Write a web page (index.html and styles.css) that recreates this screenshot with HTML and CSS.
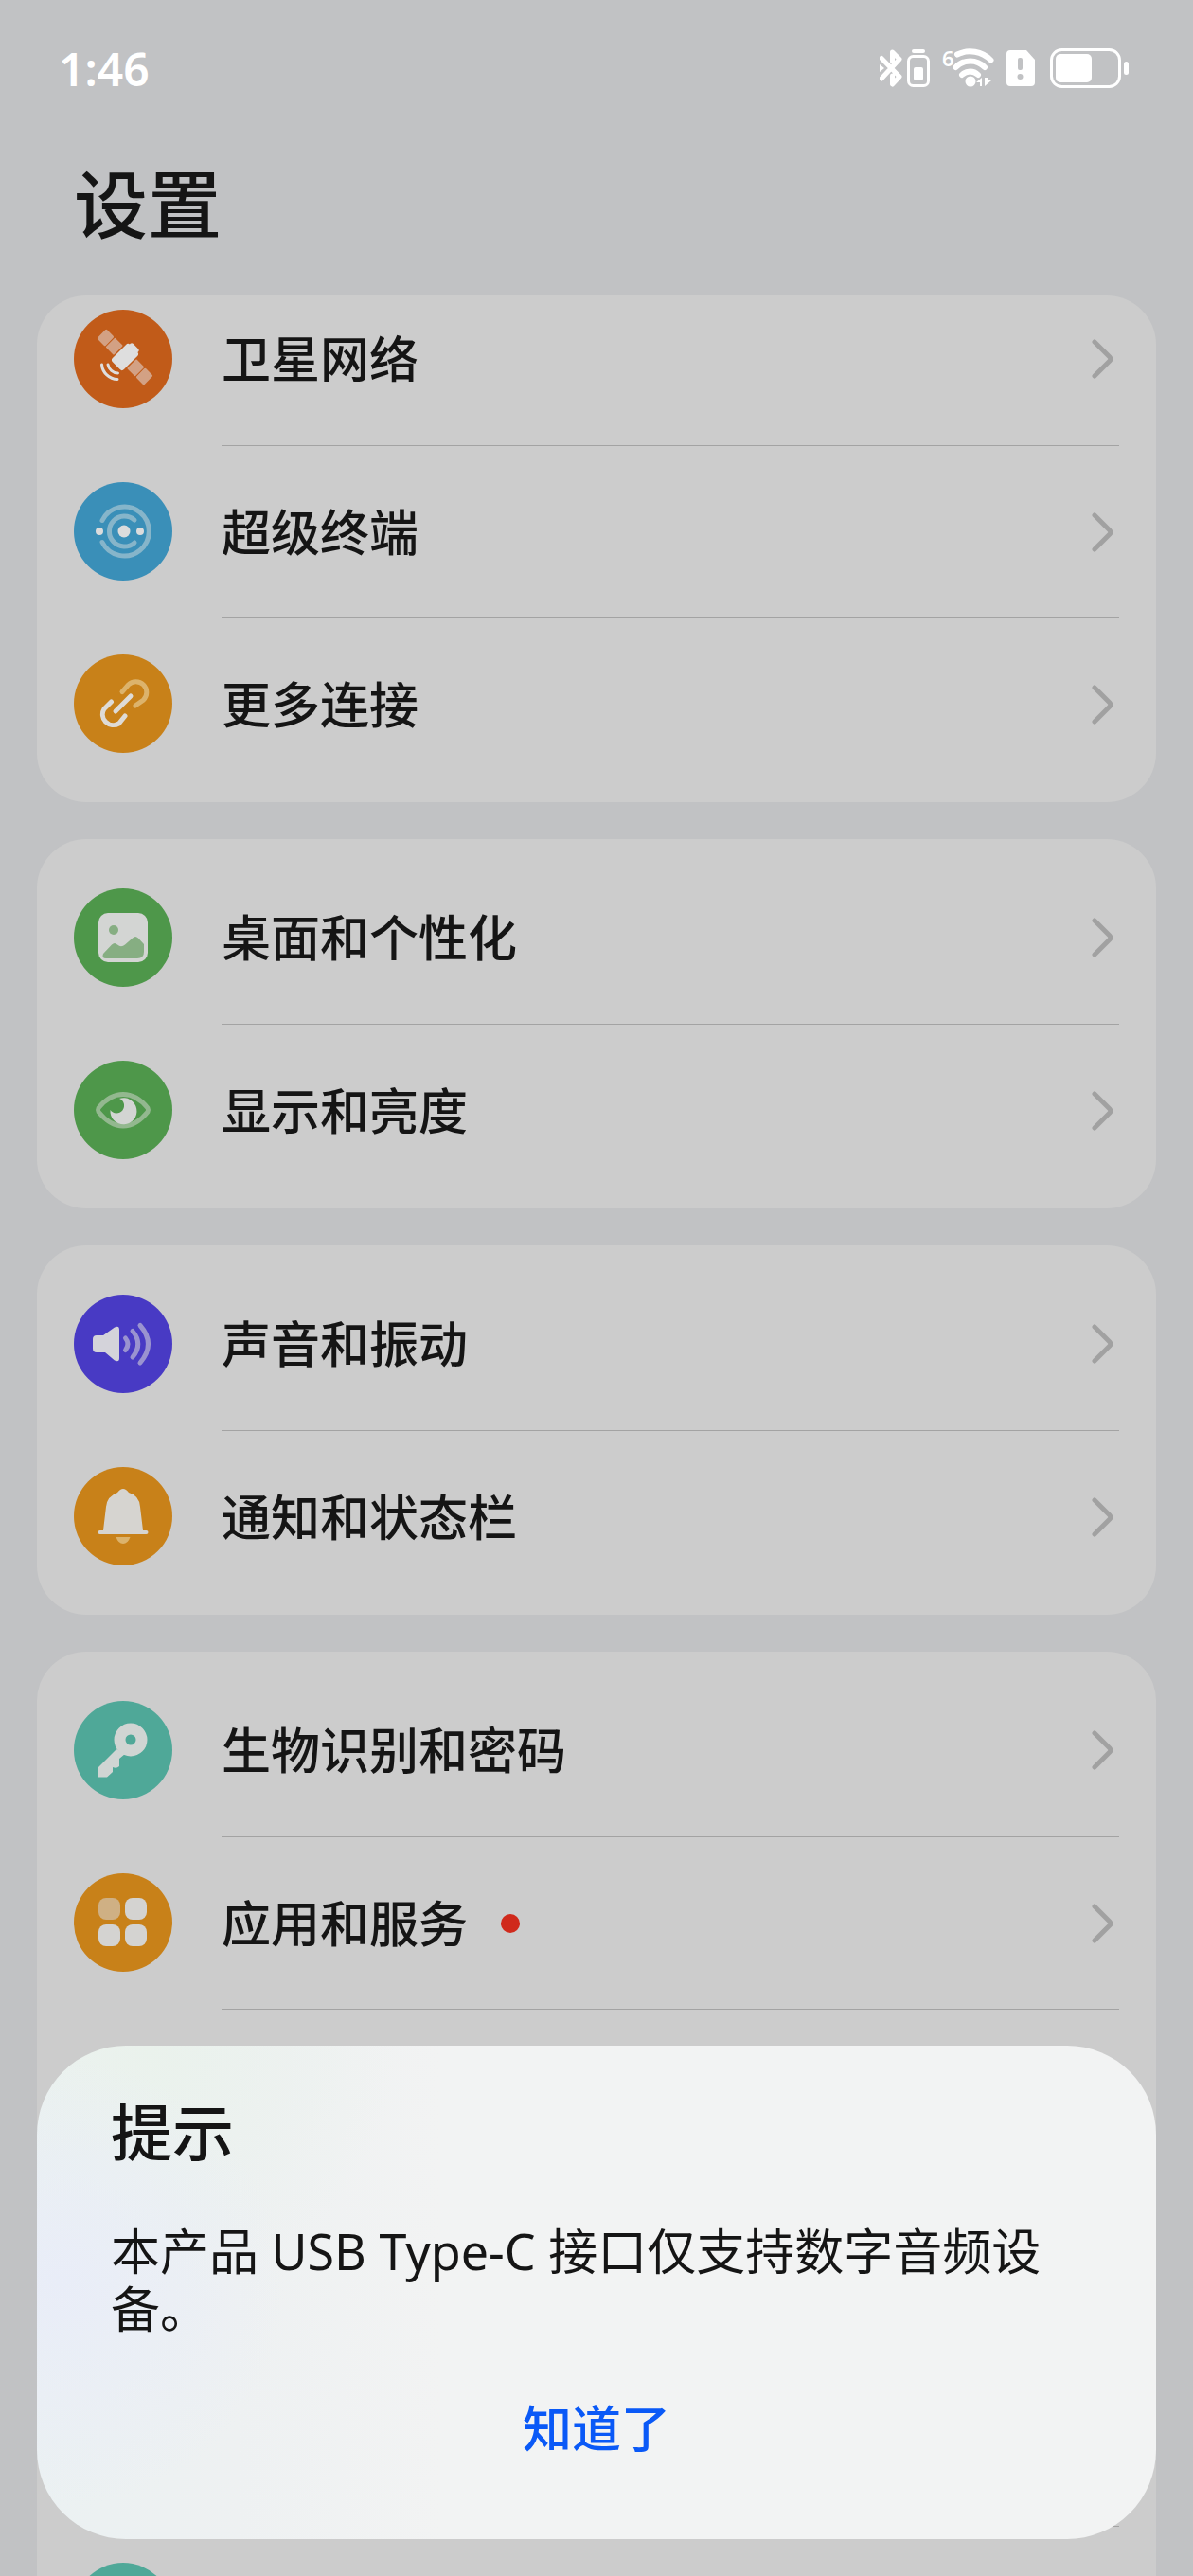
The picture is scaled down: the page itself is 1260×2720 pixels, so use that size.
FILE: index.html
```
<!DOCTYPE html>
<html lang="zh-CN">
<head>
    <meta charset="UTF-8">
    <meta name="viewport" content="width=device-width, initial-scale=1.0">
    <title>设置</title>
    <link rel="stylesheet" href="styles.css">
</head>
<body>
    <!-- Status bar -->
    <div class="status-bar">
        <span class="time">1:46</span>
        <div class="status-icons">
            <svg class="bluetooth" width="24" height="42" viewBox="0 0 24 42">
                <path d="M2 10.500L21 30L13.500 38V29M13.500 14V4L21 11.500L2 32" fill="none" stroke="#fff" stroke-width="5" stroke-linecap="round" stroke-linejoin="round"/>
                <path d="M0 17l5 4-5 4z" fill="#fff"/>
            </svg>
            <svg class="device-battery" width="24" height="42" viewBox="0 0 24 42">
                <rect x="5" y="1" width="14" height="4" rx="2" fill="#fff"/>
                <rect x="1.500" y="8.500" width="21" height="31" rx="5" fill="none" stroke="#fff" stroke-width="3"/>
                <rect x="7" y="20" width="10" height="14" rx="2" fill="#fff"/>
            </svg>
            <svg class="wifi" width="55" height="42" viewBox="0 0 55 42">
                <text x="0" y="19" class="wifi-gen">6</text>
                <g fill="none" stroke="#fff" stroke-width="6" stroke-linecap="round">
                    <path d="M16 6.500A31 31 0 0 1 51.500 12.500"/>
                    <path d="M14.500 20A21 21 0 0 1 45 20"/>
                    <path d="M21 28A12 12 0 0 1 38 28"/>
                </g>
                <circle cx="30" cy="35" r="5.500" fill="#fff"/>
                <path d="M42 31v9h-2v-4h-4zM45 31v9l7-6h-4v-3z" fill="#fff"/>
            </svg>
            <svg class="sim" width="30" height="42" viewBox="0 0 30 42">
                <path d="M4 2H21L30 12V36a4 4 0 0 1-4 4H4a4 4 0 0 1-4-4V6a4 4 0 0 1 4-4z" fill="#fff"/>
                <rect x="12" y="10" width="5" height="13" rx="2" fill="#c1c2c4"/>
                <circle cx="14.500" cy="30" r="3" fill="#c1c2c4"/>
            </svg>
            <svg class="battery" width="83" height="42" viewBox="0 0 83 42">
                <rect x="1.500" y="1.500" width="72" height="39" rx="11" fill="none" stroke="#fff" stroke-width="3"/>
                <rect x="6" y="6" width="38" height="30" rx="5" fill="#fff"/>
                <rect x="78" y="14" width="5" height="14" rx="2.500" fill="#fff"/>
            </svg>
        </div>
    </div>

    <h1 class="page-title">设置</h1>

    <!-- Shared chevron -->
    <svg class="symbols" width="0" height="0">
        <symbol id="chevron" viewBox="0 0 24 44">
            <path d="M4 4L20 20q2 2 0 4L4 40" fill="none" stroke="#a1a1a1" stroke-width="5" stroke-linecap="round" stroke-linejoin="round"/>
        </symbol>
    </svg>

    <main class="settings">
        <ul class="group scrolled">
            <li>
                <a class="row" href="#satellite">
                    <svg class="icon orange" viewBox="0 0 104 104">
                        <g transform="rotate(45 54 50)">
                            <g fill="#d3a184">
                                <rect x="19" y="43" width="12" height="14" rx="1.500"/>
                                <rect x="32" y="43" width="12" height="14" rx="1"/>
                                <rect x="64" y="43" width="12" height="14" rx="1"/>
                                <rect x="77" y="43" width="12" height="14" rx="1.500"/>
                            </g>
                            <rect x="45.500" y="37" width="17" height="26" rx="3" fill="#dedede"/>
                            <rect x="48" y="34" width="12" height="6" rx="2" fill="#dedede"/>
                        </g>
                        <g fill="none" stroke="#dedede" stroke-width="3" stroke-linecap="round">
                            <path d="M29.500 58A17 17 0 0 0 46 73.500"/>
                            <path d="M36 58A11 11 0 0 0 46.500 67"/>
                        </g>
                    </svg>
                    <span class="row-body">
                        <span class="label">卫星网络</span>
                        <svg class="chevron"><use href="#chevron"/></svg>
                    </span>
                </a>
            </li>
            <li>
                <a class="row" href="#super-device">
                    <svg class="icon blue" viewBox="0 0 104 104">
                        <g fill="none" stroke="#86b5ca" stroke-width="5" stroke-linecap="round">
                            <path d="M30 40.500A26 26 0 1 1 30 63.500"/>
                            <path d="M64 40A16 16 0 1 0 64 64"/>
                        </g>
                        <g fill="#dcdcdc">
                            <circle cx="53" cy="52" r="6.500"/>
                            <circle cx="27" cy="52" r="4"/>
                            <circle cx="70" cy="52" r="4"/>
                        </g>
                    </svg>
                    <span class="row-body">
                        <span class="label">超级终端</span>
                        <svg class="chevron"><use href="#chevron"/></svg>
                    </span>
                </a>
            </li>
            <li>
                <a class="row" href="#connections">
                    <svg class="icon amber" viewBox="0 0 104 104">
                        <g fill="none" stroke-width="5" stroke-linecap="round">
                            <path d="M51 39.500L57.500 32A11.300 11.300 0 0 1 73.500 48L65 54" stroke="#dcb36c"/>
                            <path d="M39.500 50L32 57.500A11.300 11.300 0 0 0 47.500 73L54 65" stroke="#dedbd6"/>
                            <path d="M60 44L44 60" stroke="#dedbd6"/>
                        </g>
                    </svg>
                    <span class="row-body">
                        <span class="label">更多连接</span>
                        <svg class="chevron"><use href="#chevron"/></svg>
                    </span>
                </a>
            </li>
        </ul>

        <ul class="group">
            <li>
                <a class="row" href="#desktop">
                    <svg class="icon green" viewBox="0 0 104 104">
                        <rect x="26" y="26" width="52" height="52" rx="10" fill="#d3d5d3"/>
                        <circle cx="42" cy="44" r="5" fill="#86ae82"/>
                        <path d="M31 69L40 59.500q3-3 6 0q4 3.500 8 0L62 52.500q3-3 6 0L74 59V67q0 7-7 7H34q-5 0-3-5z" fill="#86ae82"/>
                    </svg>
                    <span class="row-body">
                        <span class="label">桌面和个性化</span>
                        <svg class="chevron"><use href="#chevron"/></svg>
                    </span>
                </a>
            </li>
            <li>
                <a class="row" href="#display">
                    <svg class="icon green" viewBox="0 0 104 104">
                        <path d="M26 50C34 40 43 35.500 52 35.500S70 40 78 50Q79 52 78 54C70 64 61 69 52 69S34 64 26 54Q25 52 26 50z" fill="none" stroke="#93b88f" stroke-width="5"/>
                        <path d="M48 40A14 14 0 1 1 38.500 52A8 8 0 1 0 48 40z" fill="#d3d5d3"/>
                    </svg>
                    <span class="row-body">
                        <span class="label">显示和亮度</span>
                        <svg class="chevron"><use href="#chevron"/></svg>
                    </span>
                </a>
            </li>
        </ul>

        <ul class="group">
            <li>
                <a class="row" href="#sound">
                    <svg class="icon purple" viewBox="0 0 104 104">
                        <path d="M24 43H31L43 34.500Q48 32 48 37V67Q48 72 43 69.500L33 61H24Q20 61 20 57V47Q20 43 24 43z" fill="#d4d3da"/>
                        <g fill="none" stroke="#9a93d0" stroke-width="5" stroke-linecap="round">
                            <path d="M54.500 46Q59.500 52 54.500 58.500"/>
                            <path d="M62 38.500Q73.500 52 62 66"/>
                            <path d="M70 32.500Q87 52 70 72"/>
                        </g>
                    </svg>
                    <span class="row-body">
                        <span class="label">声音和振动</span>
                        <svg class="chevron"><use href="#chevron"/></svg>
                    </span>
                </a>
            </li>
            <li>
                <a class="row" href="#notifications">
                    <svg class="icon amber" viewBox="0 0 104 104">
                        <path d="M46 27Q52 19 58 27Q69 30 70 42L73 67H76.500a2 2 0 0 1 0 4H27.500a2 2 0 0 1 0-4H31L34 42Q35 31 46 27z" fill="#d6d4d0"/>
                        <path d="M44.500 74H59.500Q57 81 52 81T44.500 74z" fill="#dcb36c"/>
                    </svg>
                    <span class="row-body">
                        <span class="label">通知和状态栏</span>
                        <svg class="chevron"><use href="#chevron"/></svg>
                    </span>
                </a>
            </li>
        </ul>

        <ul class="group">
            <li>
                <a class="row" href="#biometrics">
                    <svg class="icon teal" viewBox="0 0 104 104">
                        <circle cx="60" cy="41" r="11.500" fill="none" stroke="#d0d5d3" stroke-width="12"/>
                        <path d="M45 51L26 70V80.500H35L41 75V70Q45 72 48 69V61L54 56z" fill="#d0d5d3"/>
                    </svg>
                    <span class="row-body">
                        <span class="label">生物识别和密码</span>
                        <svg class="chevron"><use href="#chevron"/></svg>
                    </span>
                </a>
            </li>
            <li>
                <a class="row" href="#apps">
                    <svg class="icon amber" viewBox="0 0 104 104">
                        <rect x="26" y="26" width="23" height="23" rx="8" fill="#cfb084"/>
                        <g fill="#d4d3d1">
                            <rect x="54" y="26" width="23" height="23" rx="8"/>
                            <rect x="26" y="54" width="23" height="23" rx="8"/>
                            <rect x="54" y="54" width="23" height="23" rx="8"/>
                        </g>
                    </svg>
                    <span class="row-body">
                        <span class="label">应用和服务</span>
                        <span class="dot"></span>
                        <svg class="chevron"><use href="#chevron"/></svg>
                    </span>
                </a>
            </li>
            <!-- Rows behind the dialog -->
            <li class="row"><span class="icon"></span><span class="row-body"></span></li>
            <li class="row"><span class="icon"></span><span class="row-body"></span></li>
            <li class="row"><span class="icon"></span><span class="row-body"></span></li>
            <li class="row"><span class="icon teal"></span><span class="row-body"></span></li>
        </ul>
    </main>

    <!-- Dialog -->
    <div class="dialog" role="alertdialog" aria-labelledby="dialog-title" aria-describedby="dialog-text">
        <h2 id="dialog-title">提示</h2>
        <p id="dialog-text">本产品 USB Type-C 接口仅支持数字音频设备。</p>
        <button type="button">知道了</button>
    </div>
</body>
</html>
```
FILE: styles.css
```
* {
    box-sizing: border-box;
}
body {
    margin: 0;
    height: 100vh;
    overflow: hidden;
    position: relative;
    background-color: #c1c2c4;
    color: #151515;
    font-family: "Noto Sans", "Noto Sans CJK SC", sans-serif;
}

/* Status bar */
.status-bar {
    display: flex;
    align-items: center;
    justify-content: space-between;
    height: 144px;
    padding: 0 68px 0 62px;
    color: #fff;
}
.time {
    font-size: 48px;
    font-weight: 600;
}
.status-icons {
    display: flex;
}
.device-battery {
    margin-left: 5px;
}
.wifi, .sim {
    margin-left: 13px;
}
.wifi {
    overflow: visible;
}
.battery {
    margin-left: 16px;
}
.wifi-gen {
    font-size: 22px;
    font-weight: 600;
    fill: #fff;
}

.page-title {
    margin: 0;
    padding: 0 78px 24px;
    font-size: 78px;
    line-height: 144px;
    font-weight: 500;
}
.symbols {
    position: absolute;
}

/* Settings list */
.settings {
    display: flex;
    flex-direction: column;
    gap: 39px;
    padding: 0 39px;
}
.group {
    margin: 0;
    padding: 13px 0;
    list-style: none;
    background-color: #ccc;
    border-radius: 52px;
}
.scrolled {
    padding-top: 0;
    overflow: hidden;
}
.scrolled li:first-child {
    margin-top: -24px;
}
.row {
    display: flex;
    align-items: center;
    gap: 52px;
    height: 182px;
    padding: 0 39px;
    color: inherit;
    text-decoration: none;
}
.icon {
    flex: none;
    width: 104px;
    height: 104px;
    border-radius: 50%;
}
.row-body {
    flex: 1;
    display: flex;
    align-items: center;
    align-self: stretch;
    padding-right: 6px;
}
li + li .row-body, li + .row .row-body {
    border-top: 1px solid #a3a3a3;
}
.label {
    font-size: 52px;
    line-height: 60px;
    font-weight: 500;
}
.chevron {
    width: 24px;
    height: 44px;
    margin-left: auto;
}
.dot {
    width: 20px;
    height: 20px;
    margin-left: 35px;
    border-radius: 50%;
    background-color: #d02a1c;
}

.orange {
    background-color: #c15b19;
}
.blue {
    background-color: #3a8fb8;
}
.amber {
    background-color: #c88119;
}
.green {
    background-color: #4e974a;
}
.purple {
    background-color: #483ac4;
}
.teal {
    background-color: #4fa898;
}

/* Dialog */
.dialog {
    position: absolute;
    left: 39px;
    right: 39px;
    bottom: 39px;
    padding: 52px 78px 56px;
    border-radius: 94px;
    background-color: #f2f3f3;
    background-image:
        radial-gradient(circle at 2% 48%, #e9edf8 0%, rgba(233, 237, 248, 0) 20%),
        radial-gradient(circle at 10% 0%, #eaf2ec 0%, rgba(234, 242, 236, 0) 22%),
        linear-gradient(90deg, #ebf1f2 0%, #eef1f2 18%, #f2f3f3 36%);
}
.dialog h2 {
    margin: 0 0 56px;
    font-size: 65px;
    line-height: 78px;
    font-weight: 500;
}
.dialog p {
    margin: 0 0 35px;
    font-size: 52px;
    line-height: 61px;
}
.dialog button {
    display: block;
    width: 100%;
    padding: 0;
    border: none;
    background: none;
    color: #0a59f7;
    font-family: inherit;
    font-size: 52px;
    line-height: 122px;
    font-weight: 500;
    cursor: pointer;
}
```
